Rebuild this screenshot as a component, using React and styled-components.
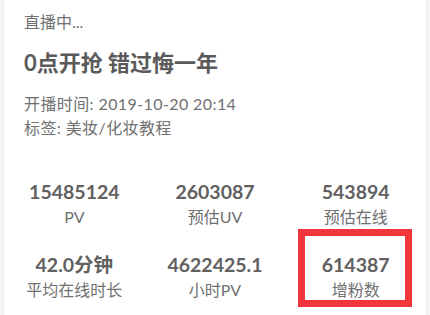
import styled, { createGlobalStyle } from 'styled-components'

const GlobalStyle = createGlobalStyle`
  html, body {
    margin: 0;
    padding: 0;
    background: #f6f6f6;
  }
  body {
    font-family: Lato, "Noto Sans CJK SC", sans-serif;
    color: #707070;
  }
`

const stats = [
  { value: '15485124', label: 'PV' },
  { value: '2603087', label: '预估UV' },
  { value: '543894', label: '预估在线' },
  { value: '42.0分钟', label: '平均在线时长' },
  { value: '4622425.1', label: '小时PV' },
  { value: '614387', label: '增粉数', marked: true },
]

export default function App() {
  return (
    <>
      <GlobalStyle />
      <Card>
        <Status>直播中...</Status>
        <Title>0点开抢 错过悔一年</Title>
        <Meta>
          <MetaLine>开播时间: 2019-10-20 20:14</MetaLine>
          <MetaLine>标签: 美妆/化妆教程</MetaLine>
        </Meta>
        <StatGrid>
          {stats.map((s) => (
            <Stat key={s.label} $marked={s.marked}>
              <StatValue>{s.value}</StatValue>
              <StatLabel>{s.label}</StatLabel>
            </Stat>
          ))}
        </StatGrid>
      </Card>
    </>
  )
}

const Card = styled.div`
  margin: 0 3px;
  height: 315px;
  box-sizing: border-box;
  padding: 10px 0 0;
  background: #fff;
  border-left: 1px solid #ececec;
  border-right: 1px solid #ececec;
  box-shadow: 0 0 4px rgba(0, 0, 0, 0.04);
`

const Status = styled.div`
  padding-left: 20px;
  font-size: 16px;
  line-height: 24px;
  color: #707070;
`

const Title = styled.h1`
  margin: 14px 0 0;
  padding-left: 20px;
  font-size: 22px;
  line-height: 30px;
  font-weight: 700;
  color: #5a5a5a;
`

const Meta = styled.div`
  margin-top: 14px;
  padding-left: 20px;
`

const MetaLine = styled.div`
  font-size: 16px;
  line-height: 24px;
  letter-spacing: 0.4px;
  color: #707070;
`

const StatGrid = styled.div`
  margin-top: 39px;
  display: grid;
  grid-template-columns: repeat(3, 1fr);
  row-gap: 23px;
  text-align: center;
`

const Stat = styled.div`
  position: relative;

  &::after {
    content: '';
    display: ${({ $marked }) => ($marked ? 'block' : 'none')};
    position: absolute;
    top: -23px;
    bottom: -5px;
    left: 13px;
    right: 14px;
    border: 7px solid #f2353b;
  }
`

const StatValue = styled.div`
  font-size: 19.5px;
  line-height: 26px;
  font-weight: 700;
  color: #616161;
`

const StatLabel = styled.div`
  font-size: 16px;
  line-height: 24px;
  color: #707070;
`
